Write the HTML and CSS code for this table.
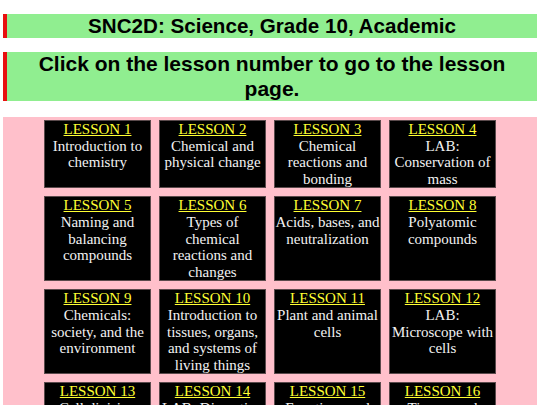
FILE: index.html
```html
<!DOCTYPE html>
<html>
<head>
<meta charset="utf-8">
<link rel="stylesheet" href="styles.css">
</head>
<body>
<h1 class="banner title">SNC2D: Science, Grade 10, Academic</h1>
<h2 class="banner instr">Click on the lesson number to go to the lesson page.</h2>
<div class="panel">
  <div class="grid">
    <div class="cell"><a href="#">LESSON 1</a><br>Introduction to chemistry</div>
    <div class="cell"><a href="#">LESSON 2</a><br>Chemical and physical change</div>
    <div class="cell"><a href="#">LESSON 3</a><br>Chemical reactions and bonding</div>
    <div class="cell"><a href="#">LESSON 4</a><br>LAB: Conservation of mass</div>
    <div class="cell"><a href="#">LESSON 5</a><br>Naming and balancing compounds</div>
    <div class="cell"><a href="#">LESSON 6</a><br>Types of chemical reactions and changes</div>
    <div class="cell"><a href="#">LESSON 7</a><br>Acids, bases, and neutralization</div>
    <div class="cell"><a href="#">LESSON 8</a><br>Polyatomic compounds</div>
    <div class="cell"><a href="#">LESSON 9</a><br>Chemicals: society, and the environment</div>
    <div class="cell"><a href="#">LESSON 10</a><br>Introduction to tissues, organs, and systems of living things</div>
    <div class="cell"><a href="#">LESSON 11</a><br>Plant and animal cells</div>
    <div class="cell"><a href="#">LESSON 12</a><br>LAB: Microscope with cells</div>
    <div class="cell"><a href="#">LESSON 13</a><br>Cell division</div>
    <div class="cell"><a href="#">LESSON 14</a><br>LAB: Dissection</div>
    <div class="cell"><a href="#">LESSON 15</a><br>Functions and</div>
    <div class="cell"><a href="#">LESSON 16</a><br>Tissues and</div>
  </div>
</div>
</body>
</html>
```

FILE: styles.css
```css
html, body {
  margin: 0;
  padding: 0;
  background: #ffffff;
}
body {
  padding: 14px 3px 0 3px;
}
.banner {
  margin: 0;
  background: #90ee90;
  border-left: 4px solid #e81010;
  text-align: center;
  font-family: "Liberation Sans", Arial, sans-serif;
  font-weight: bold;
  color: #000;
}
.title {
  font-size: 20.6px;
  line-height: 24px;
  padding: 0 8px;
  margin-bottom: 14px;
}
.instr {
  font-size: 21px;
  line-height: 24.5px;
  padding: 0 20px;
  margin-bottom: 16px;
}
.panel {
  background: #ffc0cb;
  padding: 3px 0 20px 0;
}
.grid {
  display: grid;
  grid-template-columns: repeat(4, 107px);
  gap: 8px;
  justify-content: center;
}
.cell {
  background: #000;
  border: 1px solid #5a4a4c;
  color: #f2f2f2;
  font-family: "Liberation Serif", "Times New Roman", serif;
  font-size: 15px;
  line-height: 16.6px;
  text-align: center;
}
.cell a {
  color: #ffff33;
  text-decoration: underline;
}
```
